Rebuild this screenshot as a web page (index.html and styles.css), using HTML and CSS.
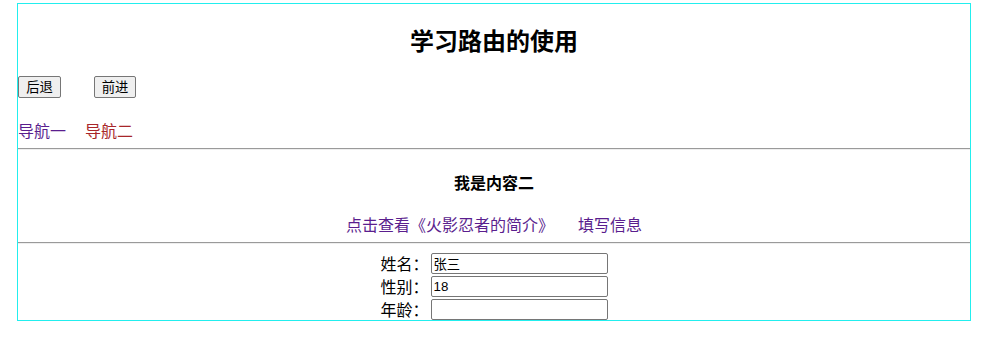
FILE: index.html
```html
<!DOCTYPE html>
<html lang="zh">
<head>
<meta charset="utf-8">
<title>学习路由的使用</title>
<link rel="stylesheet" href="styles.css">
</head>
<body>
<div class="app">
  <h2 class="title">学习路由的使用</h2>
  <div class="history">
    <button class="btn">后退</button>
    <button class="btn">前进</button>
  </div>
  <nav class="nav">
    <a class="nav-link visited" href="#">导航一</a>
    <a class="nav-link active" href="#">导航二</a>
  </nav>
  <hr class="rule">
  <div class="content">
    <h4 class="content-title">我是内容二</h4>
    <div class="sub-nav">
      <a class="nav-link visited" href="#">点击查看《火影忍者的简介》</a>
      <a class="nav-link visited" href="#">填写信息</a>
    </div>
  </div>
  <hr class="rule">
  <form class="info-form">
    <div class="row"><label class="lbl">姓名：</label><input class="field" type="text" value="张三"></div>
    <div class="row"><label class="lbl">性别：</label><input class="field" type="text" value="18"></div>
    <div class="row"><label class="lbl">年龄：</label><input class="field" type="text" value=""></div>
  </form>
</div>
</body>
</html>
```
FILE: styles.css
```css
html, body {
  margin: 0;
  padding: 0;
  background: #fff;
}
body {
  font-family: "Noto Sans CJK SC", "Noto Sans", sans-serif;
  font-size: 16px;
  color: #000;
}
.app {
  width: 952px;
  height: 316px;
  margin: 3px auto 0;
  border: 1px solid #22eeee;
}
.title {
  margin: 20px 0 0;
  font-size: 24px;
  line-height: 32px;
  font-weight: bold;
  text-align: center;
}
.history {
  display: flex;
  gap: 33px;
  margin-top: 20px;
  height: 22px;
}
.btn {
  font-family: "Noto Sans CJK SC", sans-serif;
  font-size: 13.3px;
  height: 22px;
  width: 43px;
  padding: 0;
  line-height: 18px;
  background: #efefef;
  border: 1px solid #767676;
  border-radius: 2px;
  color: #000;
}
.btn + .btn {
  width: 42px;
}
.nav {
  display: flex;
  gap: 19px;
  margin-top: 21px;
  line-height: 22px;
}
.nav-link {
  text-decoration: none;
}
.visited {
  color: #5a1e8e;
}
.active {
  color: #a8262a;
}
.rule {
  margin: 7px 0 0;
  border: 0;
  border-top: 1px solid #9a9a9a;
  border-bottom: 1px solid #eeeeee;
  height: 0;
}
.content {
  text-align: center;
}
.content-title {
  margin: 21px 0 0;
  font-size: 16px;
  line-height: 22px;
  font-weight: bold;
}
.sub-nav {
  display: flex;
  justify-content: center;
  gap: 24px;
  margin-top: 20px;
  line-height: 22px;
}
.info-form {
  display: flex;
  flex-direction: column;
  align-items: center;
  margin-top: 9px;
  gap: 2px;
}
.row {
  display: flex;
  align-items: center;
  gap: 2px;
  height: 21px;
}
.lbl {
  line-height: 21px;
}
.field {
  box-sizing: border-box;
  width: 177px;
  height: 21px;
  padding: 0 2px;
  border: 1px solid #767676;
  border-radius: 2px;
  font-family: "Liberation Sans", "Noto Sans CJK SC", sans-serif;
  font-size: 13.3px;
  color: #000;
  background: #fff;
}
```
